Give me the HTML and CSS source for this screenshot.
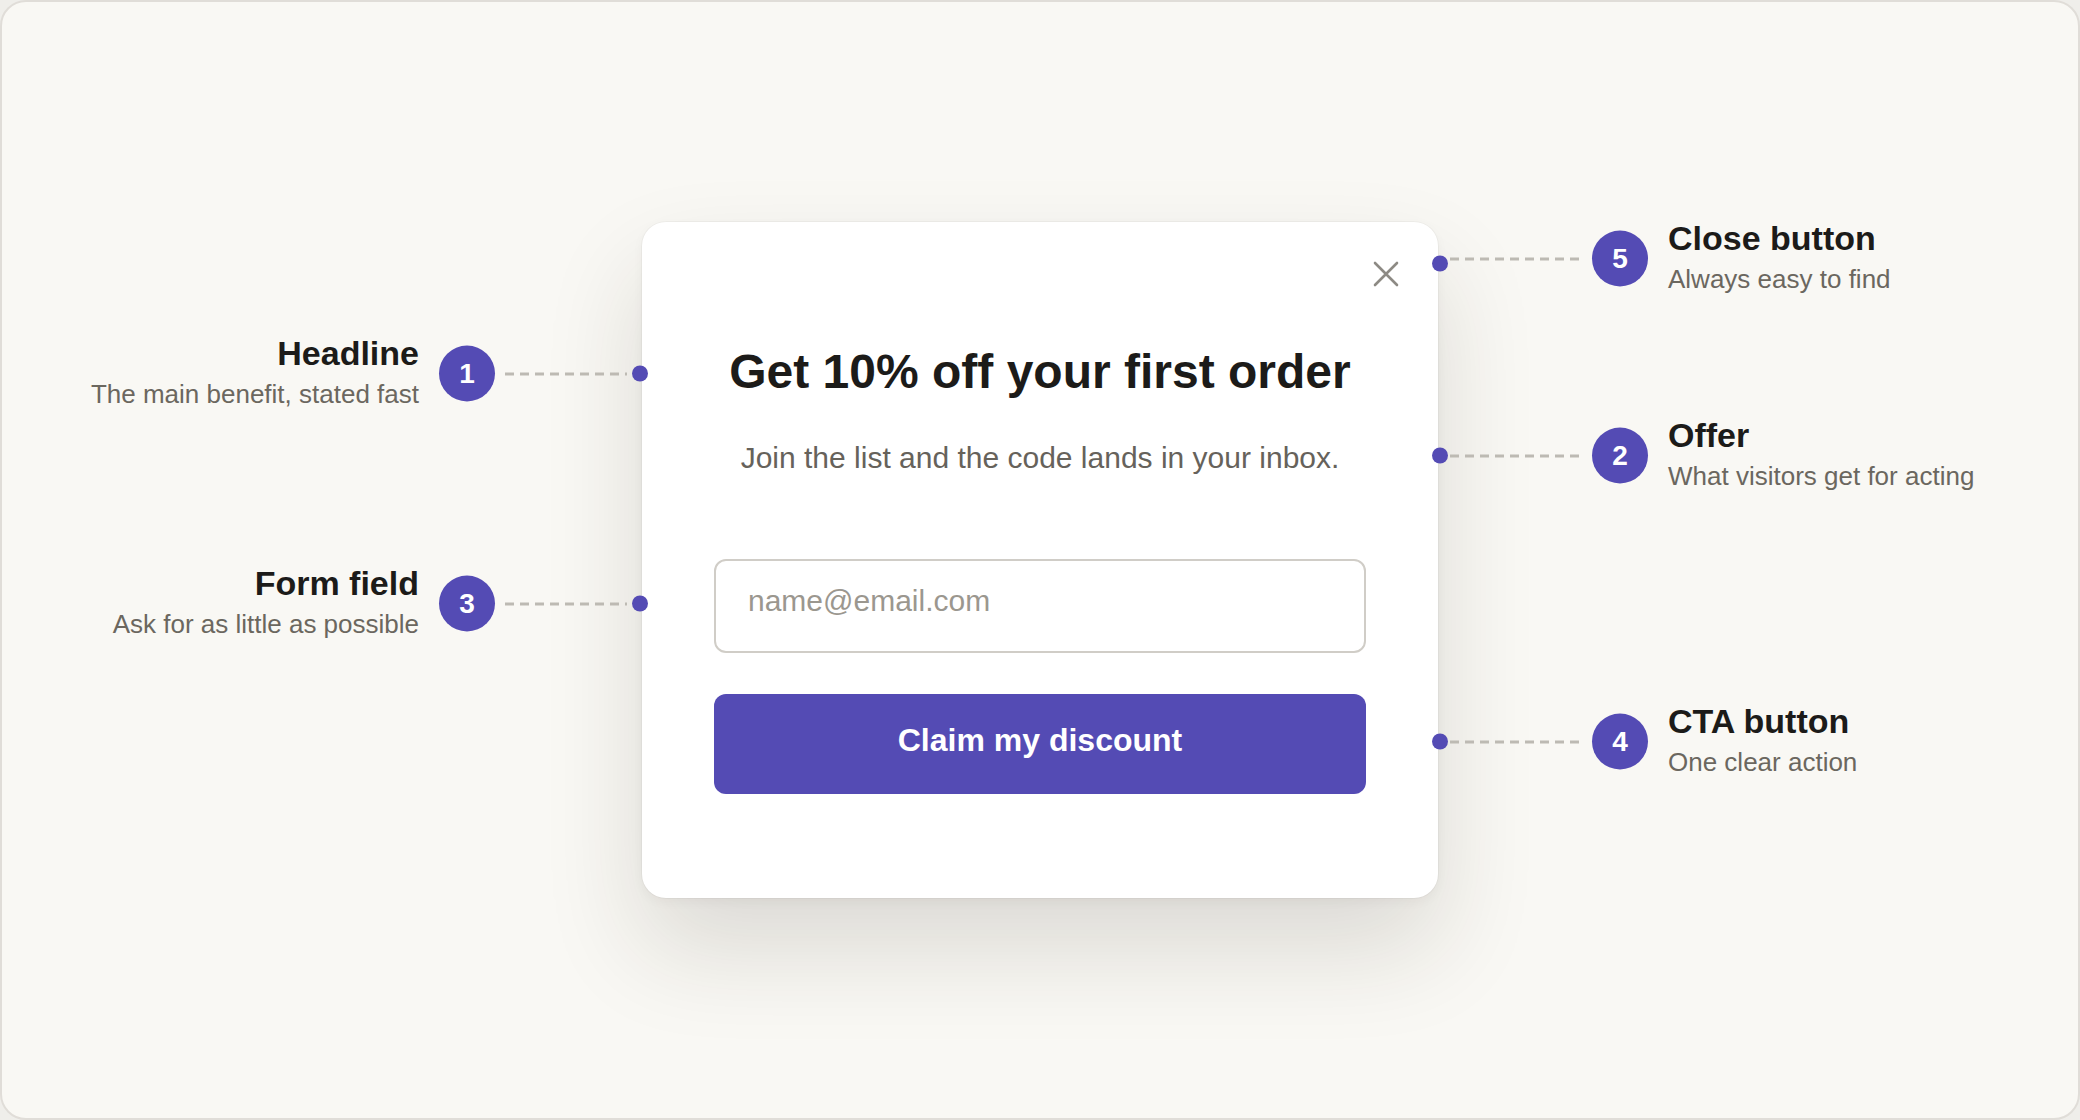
FILE: index.html
```html
<!DOCTYPE html>
<html lang="en">
  <head>
    <meta charset="UTF-8" />
    <title>Popup anatomy</title>
    <link rel="stylesheet" href="styles.css">
  </head>
  <body>
    <div class="frame">
      <div class="modal">
        <button class="close" aria-label="Close">
          <svg width="26" height="26" viewBox="0 0 26 26">
            <path d="M2 2 L24 24 M24 2 L2 24" stroke="#8d8a84" stroke-width="2.6" stroke-linecap="round" fill="none" />
          </svg>
        </button>

        <h1 class="headline">Get 10% off your first order</h1>
        <p class="offer">Join the list and the code lands in your inbox.</p>
        <input class="email" type="email" placeholder="name@email.com">
        <button class="cta">Claim my discount</button>

        <!-- callouts -->
        <div class="callout left c1">
          <div class="note">
            <div class="note-title">Headline</div>
            <div class="note-sub">The main benefit, stated fast</div>
          </div>
          <span class="badge">1</span>
          <span class="line"></span>
          <span class="dot"></span>
        </div>

        <div class="callout left c3">
          <div class="note">
            <div class="note-title">Form field</div>
            <div class="note-sub">Ask for as little as possible</div>
          </div>
          <span class="badge">3</span>
          <span class="line"></span>
          <span class="dot"></span>
        </div>

        <div class="callout right c5">
          <span class="dot"></span>
          <span class="line"></span>
          <span class="badge">5</span>
          <div class="note">
            <div class="note-title">Close button</div>
            <div class="note-sub">Always easy to find</div>
          </div>
        </div>

        <div class="callout right c2">
          <span class="dot"></span>
          <span class="line"></span>
          <span class="badge">2</span>
          <div class="note">
            <div class="note-title">Offer</div>
            <div class="note-sub">What visitors get for acting</div>
          </div>
        </div>

        <div class="callout right c4">
          <span class="dot"></span>
          <span class="line"></span>
          <span class="badge">4</span>
          <div class="note">
            <div class="note-title">CTA button</div>
            <div class="note-sub">One clear action</div>
          </div>
        </div>
      </div>
    </div>
  </body>
</html>
```

FILE: styles.css
```css
html {
  background: #efeeea;
}

body {
  margin: 0;
  font-family: "Liberation Sans", Arial, sans-serif;
}

.frame {
  box-sizing: border-box;
  height: 100vh;
  background: #f9f8f4;
  border: 2px solid #e0ddd8;
  border-radius: 26px;
  display: flex;
  justify-content: center;
  align-items: center;
}

.modal {
  position: relative;
  width: 796px;
  box-sizing: border-box;
  padding: 121px 72px 104px;
  background: #fff;
  border-radius: 24px;
  display: flex;
  flex-direction: column;
  box-shadow: 0 0 0 1px rgba(0, 0, 0, 0.03), 0 4px 12px rgba(40, 35, 20, 0.04),
    0 50px 100px rgba(40, 35, 20, 0.14);
}

.close {
  position: absolute;
  top: 39px;
  right: 39px;
  width: 26px;
  height: 26px;
  padding: 0;
  border: none;
  background: none;
  cursor: pointer;
}

.close svg {
  display: block;
}

.headline {
  margin: 0;
  font-size: 48px;
  line-height: 57.6px;
  font-weight: 700;
  color: #1c1b19;
  text-align: center;
}

.offer {
  margin: 35px 0 0;
  font-size: 30px;
  line-height: 45px;
  color: #66625b;
  text-align: center;
}

.email {
  margin-top: 79px;
  height: 94px;
  box-sizing: border-box;
  padding: 0 32px 10px;
  border: 2px solid #d0cdc7;
  border-radius: 12px;
  font-family: inherit;
  font-size: 30px;
  color: #1c1b19;
  outline: none;
}

.email::placeholder {
  color: #9b978f;
}

.cta {
  margin-top: 41px;
  height: 100px;
  padding: 0 0 8px;
  border: none;
  border-radius: 12px;
  background: #544bb4;
  color: #fff;
  font-family: inherit;
  font-size: 32px;
  font-weight: 700;
  cursor: pointer;
}

/* callouts */

.callout {
  position: absolute;
  display: flex;
  align-items: center;
  white-space: nowrap;
  transform: translateY(-50%);
}

.callout.left {
  right: calc(100% - 6px);
}

.callout.right {
  left: calc(100% - 6px);
}

.c1 { top: 152px; }
.c3 { top: 382px; }
.c5 { top: 37px; }
.c2 { top: 234px; }
.c4 { top: 520px; }

.c5 .dot {
  transform: translateY(5px);
}

.note {
  margin-bottom: 4px;
}

.note-title {
  font-size: 34px;
  line-height: 41px;
  font-weight: 700;
  color: #1c1b19;
}

.note-sub {
  margin-top: 2px;
  font-size: 26px;
  line-height: 36px;
  color: #6b675f;
}

.left .note {
  text-align: right;
  margin-right: 20px;
}

.right .note {
  margin-left: 20px;
}

.badge {
  width: 56px;
  height: 56px;
  border-radius: 50%;
  background: #544bb4;
  color: #fff;
  font-size: 28px;
  font-weight: 700;
  display: flex;
  align-items: center;
  justify-content: center;
  flex-shrink: 0;
}

.line {
  height: 3px;
  background: repeating-linear-gradient(90deg, #bdbab3 0 9px, transparent 9px 15px);
}

.left .line {
  width: 122px;
  margin: 0 5px 0 10px;
}

.right .line {
  width: 131px;
  margin: 0 13px 0 0;
  background: repeating-linear-gradient(270deg, #bdbab3 0 9px, transparent 9px 15px);
}

.dot {
  width: 16px;
  height: 16px;
  border-radius: 50%;
  background: #544bb4;
  flex-shrink: 0;
}
```
